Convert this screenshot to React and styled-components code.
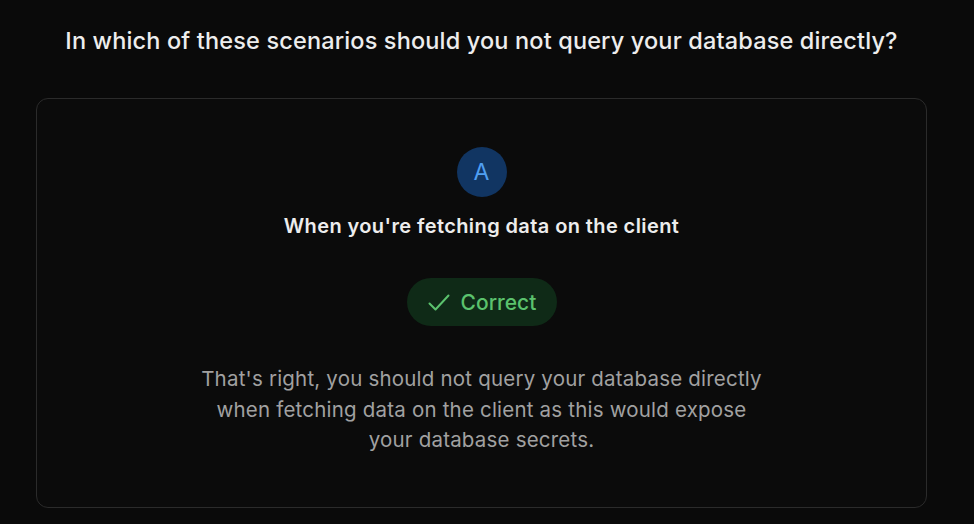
import styled, { createGlobalStyle } from "styled-components";

const GlobalStyle = createGlobalStyle`
	html, body {
		margin: 0;
		padding: 0;
		background: #0a0a0a;
	}
	body {
		font-family: "Inter", "Liberation Sans", sans-serif;
		-webkit-font-smoothing: antialiased;
	}
`;

export default function App() {
	return (
		<>
			<GlobalStyle />
			<Page>
				<Question>
					In which of these scenarios should you not query your database
					directly?
				</Question>

				<Card>
					<Letter>A</Letter>
					<Answer>When you're fetching data on the client</Answer>
					<Badge>
						<CheckIcon />
						Correct
					</Badge>
					<Explanation>
						That's right, you should not query your database directly when
						fetching data on the client as this would expose your database
						secrets.
					</Explanation>
				</Card>
			</Page>
		</>
	);
}

function CheckIcon() {
	return (
		<svg width="24" height="24" viewBox="0 0 24 24" fill="none">
			<path
				d="M2.5 13.5L8.5 19.5L21.5 5.5"
				stroke="currentColor"
				strokeWidth="2"
				strokeLinecap="round"
				strokeLinejoin="round"
			/>
		</svg>
	);
}

const Page = styled.main`
	width: 891px;
	margin-left: 36px;
	padding-top: 26px;
	display: flex;
	flex-direction: column;
	align-items: center;
`;

const Question = styled.h1`
	margin: 0 0 42px;
	font-size: 23.5px;
	line-height: 30px;
	font-weight: 500;
	color: #ededed;
	text-align: center;
	letter-spacing: 0.15px;
	white-space: nowrap;
`;

const Card = styled.section`
	box-sizing: border-box;
	width: 100%;
	height: 410px;
	border: 1.5px solid #2b2b2b;
	border-radius: 12px;
	background: #0b0b0b;
	padding-top: 48px;
	display: flex;
	flex-direction: column;
	align-items: center;
`;

const Letter = styled.div`
	width: 50px;
	height: 50px;
	border-radius: 50%;
	background: #113562;
	color: #4f9ff2;
	font-size: 23px;
	font-weight: 400;
	display: flex;
	justify-content: center;
	align-items: center;
`;

const Answer = styled.h2`
	margin: 16px 0 0;
	font-size: 20px;
	line-height: 26px;
	font-weight: 600;
	color: #ededed;
	letter-spacing: 0.4px;
`;

const Badge = styled.div`
	margin-top: 39px;
	box-sizing: border-box;
	width: 150px;
	height: 48px;
	border-radius: 24px;
	background: #0f2a17;
	color: #5bc26d;
	font-size: 21px;
	font-weight: 500;
	display: flex;
	align-items: center;
	justify-content: center;
	gap: 10px;

	svg {
		width: 24px;
		height: 24px;
	}
`;

const Explanation = styled.p`
	margin: 38px 0 0;
	width: 568px;
	font-size: 20.5px;
	line-height: 30.5px;
	font-weight: 400;
	color: #a1a1a1;
	text-align: center;
	letter-spacing: 0.2px;
`;
